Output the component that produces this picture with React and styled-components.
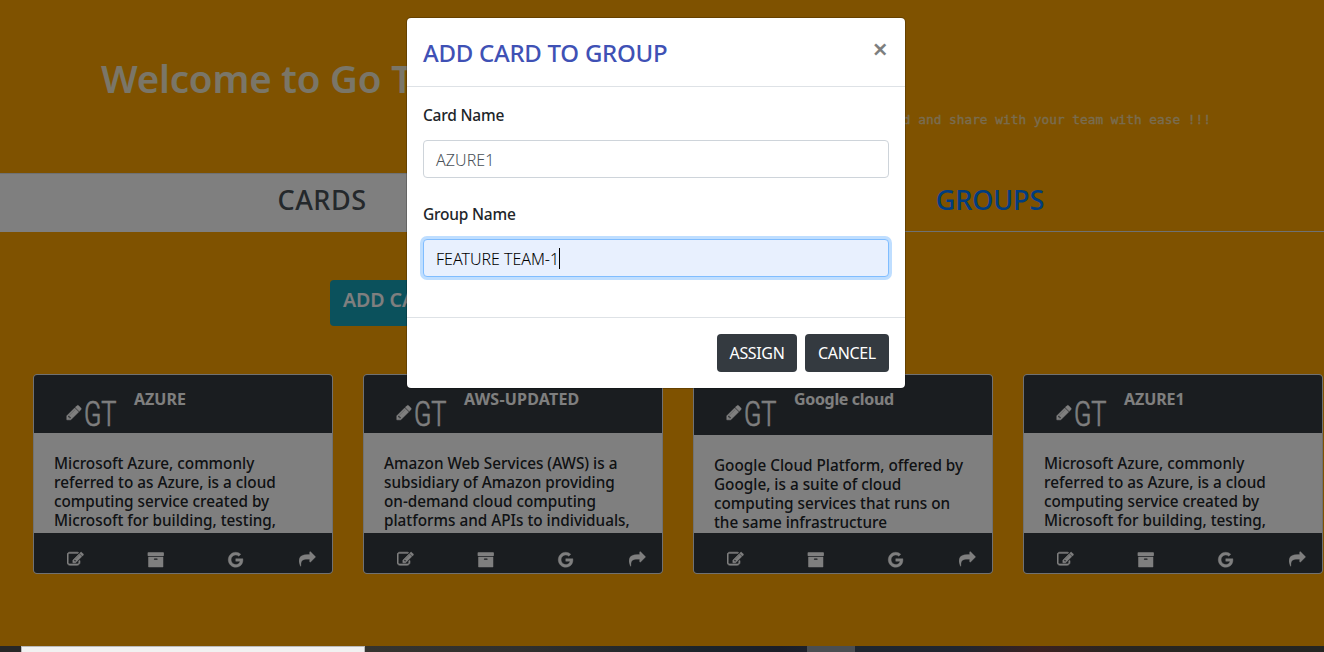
import React from "react";
import styled, { createGlobalStyle } from "styled-components";

const GlobalStyle = createGlobalStyle`
  *, *::before, *::after { box-sizing: border-box; }
  body {
    margin: 0;
    background: #ffa500;
    color: #212529;
    font-family: "Noto Sans", "Open Sans", sans-serif;
    font-size: 16px;
    line-height: 1.5;
    overflow: hidden;
  }
  h1, h2, h3, p { margin: 0; }
`;

const Screen = styled.div`
  display: flex;
  flex-direction: column;
  height: 652px;
  overflow: hidden;
`;

const Page = styled.div`
  position: relative;
  flex: 0 0 646px;
  overflow: hidden;
  background: #ffa500;
`;

const Banner = styled.header`
  display: flex;
  flex-direction: column;
  height: 173px;
  padding: 54px 113px 0 101px;
`;

const BannerTitle = styled.h1`
  font-size: 38.5px;
  font-weight: 600;
  line-height: 48px;
  letter-spacing: -0.2px;
  color: #f4ecd0;
`;

const Tagline = styled.p`
  align-self: flex-end;
  margin-top: 7px;
  font-family: "DejaVu Sans Mono", monospace;
  font-size: 12.8px;
  font-weight: 400;
  line-height: 21px;
  color: #f2d8a0;
  -webkit-text-stroke: 0.35px #f2d8a0;
  white-space: pre;
`;

const Tabs = styled.nav`
  display: flex;
  height: 59px;
  border-bottom: 1px solid #dee2e6;
`;

const Tab = styled.div`
  flex: ${(p) => (p.$active ? "0 0 644px" : "1")};
  height: ${(p) => (p.$active ? 59 : 58)}px;
  padding: 9px 0 0 ${(p) => (p.$active ? 0 : 12)}px;
  border-top: 1px solid ${(p) => (p.$active ? "#dee2e6" : "transparent")};
  background: ${(p) => (p.$active ? "#fff" : "transparent")};
  color: ${(p) => (p.$active ? "#495057" : "#007bff")};
  font-size: 27px;
  font-weight: 540;
  line-height: 34px;
  letter-spacing: ${(p) => (p.$active ? "0.5px" : "-0.1px")};
  text-align: center;
`;

const Toolbar = styled.div`
  display: flex;
  height: 142px;
  padding: 48px 0 0 330px;
`;

const AddButton = styled.button`
  width: 140px;
  height: 46px;
  padding: 0 12px 6px 13px;
  border: 0;
  border-radius: 4px;
  background: #17a2b8;
  color: #fff;
  font: 600 19.6px/24px "Noto Sans", sans-serif;
  letter-spacing: -0.1px;
  text-align: left;
`;

const CardRow = styled.main`
  display: flex;
  gap: 30px;
  padding-left: 33px;
`;

const Card = styled.article`
  display: flex;
  flex-direction: column;
  flex: 0 0 300px;
  height: 200px;
  overflow: hidden;
  border: 1px solid #e0e2e4;
  border-radius: 4px;
  background: #fff;
`;

const CardHeader = styled.div`
  display: flex;
  flex: 0 0 ${(p) => (p.$tall ? 60 : 58)}px;
  padding-left: 32px;
  background: #343a40;
  color: #fff;
`;

const CardTitle = styled.h3`
  margin: 12px 0 0 16px;
  font-size: 16px;
  font-weight: 700;
  line-height: 25px;
  letter-spacing: ${(p) => p.$tracking}px;
`;

const Brand = styled.div`
  display: flex;
  gap: 1px;
  padding-top: 16px;
  width: 52px;
`;

const BrandMark = styled.svg`
  flex: none;
  font-family: Roboto, sans-serif;
  font-size: 35px;
  font-weight: 300;
`;

const CardBody = styled.div`
  flex: 1;
  min-height: 0;
  overflow: hidden;
  padding: 21px 0 0 20px;
  color: #212529;
  font-size: 15.3px;
  font-weight: 460;
  line-height: 19px;
  white-space: pre-line;
`;

const CardFooter = styled.div`
  display: grid;
  flex: 0 0 40px;
  grid-template-columns: 80px 80px 72px 17px;
  padding: 18px 0 0 33px;
  background: #343a40;
  color: #fff;
`;

const Glyph = styled.svg`
  display: block;
  flex: none;
  fill: currentColor;
  stroke: currentColor;
  stroke-width: ${(p) => p.$weight || 0};
`;

const Backdrop = styled.div`
  position: absolute;
  inset: 0;
  display: flex;
  justify-content: center;
  align-items: flex-start;
  padding: 17px 12px 0 0;
  background: rgba(0, 0, 0, 0.5);
`;

const Dialog = styled.section`
  width: 500px;
  height: 372px;
  border: 1px solid rgba(0, 0, 0, 0.2);
  border-radius: 5px;
  background: #fff;
  background-clip: padding-box;
`;

const DialogHeader = styled.div`
  display: flex;
  justify-content: space-between;
  height: 69px;
  padding: 16px 17px 0 16px;
  border-bottom: 1px solid #dee2e6;
`;

const DialogTitle = styled.h2`
  color: #3f51b5;
  font-size: 24px;
  font-weight: 500;
  line-height: 37px;
  letter-spacing: -0.26px;
`;

const Close = styled.span`
  margin-top: 3px;
  font-size: 27px;
  font-weight: 600;
  line-height: 24px;
  color: #000;
  opacity: 0.5;
`;

const DialogBody = styled.div`
  display: flex;
  flex-direction: column;
  gap: 24px;
  height: 230px;
  padding: 16px;
`;

const Field = styled.label`
  display: flex;
  flex-direction: column;
  gap: 12px;
  font-size: 15.5px;
  font-weight: 500;
  line-height: 25px;
  letter-spacing: -0.22px;
`;

const Input = styled.div`
  display: flex;
  align-items: center;
  height: 38px;
  padding: 3px 12px 0;
  border: 1px solid ${(p) => (p.$focused ? "#80bdff" : "#ced4da")};
  border-radius: 4px;
  background: ${(p) => (p.$focused ? "#e8f0fe" : "#fff")};
  box-shadow: ${(p) => (p.$focused ? "0 0 0 3px #bfdeff" : "none")};
  color: ${(p) => (p.$focused ? "#000" : "#495057")};
  font-size: 16px;
  font-weight: 350;
  letter-spacing: ${(p) => (p.$focused ? -0.03 : 0.05)}px;
`;

const Caret = styled.span`
  width: 1px;
  height: 21px;
  margin-top: -3px;
  background: #000;
`;

const DialogFooter = styled.div`
  display: flex;
  justify-content: flex-end;
  gap: 8px;
  height: 71px;
  padding: 16px;
  border-top: 1px solid #dee2e6;
`;

const DarkButton = styled.button`
  width: ${(p) => p.$width}px;
  height: 38px;
  padding: 0;
  border: 0;
  border-radius: 4px;
  background: #343a40;
  color: #fff;
  font: 400 16px/24px "Noto Sans", sans-serif;
  letter-spacing: -0.34px;
`;

const Taskbar = styled.div`
  display: flex;
  height: 6px;
  background: linear-gradient(
    90deg, #272727 0, #272727 20px, #35342f 366px, #30302e 520px, #1b242b 700px,
    #1b1e28 780px, #1e262f 860px, #202630 960px, #3a2120 1040px, #282622 1120px, #242522 100%
  );
`;

const TaskbarSearch = styled.div`
  width: 344px;
  margin-left: 21px;
  border: 1px solid #bababa;
  border-bottom: 0;
  background: #f1f1f1;
`;

const TaskbarItem = styled.div`
  width: 48px;
  margin-left: 442px;
  background: #4a4e52;
`;

const PATHS = {
  pencil:
    "M491 1536l91-91-235-235-91 91v107h128v128h107zm523-928q0-22-22-22-10 0-17 7l-542 542q-7 7-7 17 0 22 22 22 10 0 17-7l542-542q7-7 7-17zm-54-192l416 416-832 832h-416v-416zm683 96q0 53-37 90l-166 166-416-416 166-165q36-38 90-38 53 0 91 38l235 234q37 39 37 91z",
  edit:
    "M888 1184l116-116-152-152-116 116v56h96v96h56zm440-720q-16-16-33 1l-350 350q-17 17-1 33t33-1l350-350q17-17 1-33zm80 594v190q0 119-84.500 203.500t-203.500 84.500h-832q-119 0-203.500-84.500t-84.500-203.500v-832q0-119 84.500-203.500t203.500-84.500h832q63 0 117 25 15 7 18 23 3 17-9 29l-49 49q-14 14-32 8-23-6-45-6h-832q-66 0-113 47t-47 113v832q0 66 47 113t113 47h832q66 0 113-47t47-113v-126q0-13 9-22l64-64q15-15 35-7t20 29zm-96-738l288 288-672 672h-288v-288zm444 132l-92 92-288-288 92-92q28-28 68-28t68 28l152 152q28 28 28 68t-28 68z",
  archive:
    "M1088 832q0-26-19-45t-45-19h-256q-26 0-45 19t-19 45 19 45 45 19h256q26 0 45-19t19-45zm576-192v960q0 26-19 45t-45 19h-1408q-26 0-45-19t-19-45v-960q0-26 19-45t45-19h1408q26 0 45 19t19 45zm64-448v256q0 26-19 45t-45 19h-1536q-26 0-45-19t-19-45v-256q0-26 19-45t45-19h1536q26 0 45 19t19 45z",
  google:
    "M896 786h725q12 67 12 128 0 217-91 387.500t-259.500 266.500-386.500 96q-157 0-299-60.500t-245-163.500-163.500-245-60.500-299 60.500-299 163.500-245 245-163.500 299-60.500q300 0 515 201l-209 201q-123-119-306-119-129 0-238.500 65t-173.500 176.500-64 243.500 64 243.500 173.500 176.500 238.500 65q87 0 160-24t120-60 82-82 51.500-87 22.500-78h-436v-264z",
  share:
    "M1792 640q0 26-19 45l-512 512q-19 19-45 19t-45-19-19-45v-256h-224q-98 0-175.500 6t-154 21.500-133 42.500-105.500 69.500-80 101-48.500 138.500-17.500 181q0 55 5 123 0 6 2.500 23.500t2.500 26.500q0 15-8.500 25t-23.500 10q-16 0-28-17-7-9-13-22t-13.500-30-10.500-24q-127-285-127-451 0-199 53-333 162-403 875-403h224v-256q0-26 19-45t45-19 45 19l512 512q19 19 19 45z",
};

function Icon({ name, size, weight }) {
  return (
    <Glyph width={size} height={size} viewBox="0 0 1792 1792" $weight={weight}>
      <path d={PATHS[name]} />
    </Glyph>
  );
}

const AZURE_TEXT =
  "Microsoft Azure, commonly\nreferred to as Azure, is a cloud\ncomputing service created by\nMicrosoft for building, testing,";

const CARDS = [
  { title: "AZURE", tracking: 0, text: AZURE_TEXT },
  {
    title: "AWS-UPDATED",
    tracking: 0.22,
    text: "Amazon Web Services (AWS) is a\nsubsidiary of Amazon providing\non-demand cloud computing\nplatforms and APIs to individuals,",
  },
  {
    title: "Google cloud",
    tracking: -0.33,
    tall: true,
    text: "Google Cloud Platform, offered by\nGoogle, is a suite of cloud\ncomputing services that runs on\nthe same infrastructure",
  },
  { title: "AZURE1", tracking: -0.1, text: AZURE_TEXT },
];

function CloudCard({ title, text, tall, tracking }) {
  return (
    <Card>
      <CardHeader $tall={tall}>
        <Brand>
          <Glyph width="17" height="36" viewBox="0 0 17 36" $weight={60}>
            <g transform="translate(-0.4 13) scale(0.0095)">
              <path d={PATHS.pencil} />
            </g>
          </Glyph>
          <BrandMark width="36" height="42" viewBox="0 0 36 42">
            <text
              x="0"
              y="35.3"
              textLength="32.5"
              lengthAdjust="spacingAndGlyphs"
              fill="#fff"
              stroke="#fff"
              strokeWidth="0.7"
            >
              GT
            </text>
          </BrandMark>
        </Brand>
        <CardTitle $tracking={tracking}>{title}</CardTitle>
      </CardHeader>
      <CardBody>{text}</CardBody>
      <CardFooter>
        <Icon name="edit" size={16.5} weight={70} />
        <Icon name="archive" size={17.5} />
        <Icon name="google" size={17.5} weight={40} />
        <Icon name="share" size={16.5} weight={30} />
      </CardFooter>
    </Card>
  );
}

export default function App() {
  return (
    <Screen>
      <GlobalStyle />
      <Page>
        <Banner>
          <BannerTitle>Welcome to Go T</BannerTitle>
          <Tagline>d and share with your team with ease !!!</Tagline>
        </Banner>
        <Tabs>
          <Tab $active>CARDS</Tab>
          <Tab>GROUPS</Tab>
        </Tabs>
        <Toolbar>
          <AddButton>ADD CA</AddButton>
        </Toolbar>
        <CardRow>
          {CARDS.map((card) => (
            <CloudCard key={card.title} {...card} />
          ))}
        </CardRow>
        <Backdrop>
          <Dialog>
            <DialogHeader>
              <DialogTitle>ADD CARD TO GROUP</DialogTitle>
              <Close>×</Close>
            </DialogHeader>
            <DialogBody>
              <Field>
                Card Name
                <Input>AZURE1</Input>
              </Field>
              <Field>
                Group Name
                <Input $focused>
                  FEATURE TEAM-1
                  <Caret />
                </Input>
              </Field>
            </DialogBody>
            <DialogFooter>
              <DarkButton $width={80}>ASSIGN</DarkButton>
              <DarkButton $width={84}>CANCEL</DarkButton>
            </DialogFooter>
          </Dialog>
        </Backdrop>
      </Page>
      <Taskbar>
        <TaskbarSearch />
        <TaskbarItem />
      </Taskbar>
    </Screen>
  );
}
